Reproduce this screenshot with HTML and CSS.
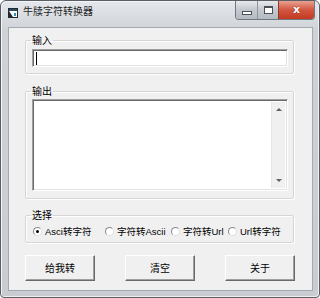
FILE: index.html
```html
<!DOCTYPE html>
<html>
<head>
  <title>牛牍字符转换器</title>
  <link rel="stylesheet" href="styles.css">
</head>
<body>
  <div class="window">
    <div class="titlebar">
      <svg class="app-icon" width="10" height="10" viewBox="0 0 10 10">
        <rect x="0.5" y="0.5" width="9" height="9" fill="#ffffff" stroke="#1d2a33"/>
        <rect x="1" y="1" width="8" height="2" fill="#2b4b5c"/>
        <path d="M1 3 L5 9 L1 9 Z" fill="#1d2a33"/>
        <rect x="6" y="5" width="2" height="3" fill="#3a8fb7"/>
      </svg>
      <span class="title">牛牍字符转换器</span>
      <div class="caption-buttons">
        <div class="cap cap-min"><span class="min-bar"></span></div>
        <div class="cap cap-max"><span class="max-box"></span></div>
        <div class="cap cap-close">x</div>
      </div>
    </div>
    <div class="client">
      <fieldset class="group group-in">
        <legend>输入</legend>
        <div class="textbox textbox-in"><span class="caret"></span></div>
      </fieldset>
      <fieldset class="group group-out">
        <legend>输出</legend>
        <div class="textbox textbox-out">
          <div class="scrollbar">
            <span class="arrow arrow-up"></span>
            <span class="arrow arrow-down"></span>
          </div>
        </div>
      </fieldset>
      <fieldset class="group group-sel">
        <legend>选择</legend>
        <div class="radios">
          <label class="radio-item item-1"><span class="radio checked"></span>Asci转字符</label>
          <label class="radio-item item-2"><span class="radio"></span>字符转Ascii</label>
          <label class="radio-item item-3"><span class="radio"></span>字符转Url</label>
          <label class="radio-item item-4"><span class="radio"></span>Url转字符</label>
        </div>
      </fieldset>
      <div class="buttons">
        <div class="btn">给我转</div>
        <div class="btn">清空</div>
        <div class="btn">关于</div>
      </div>
    </div>
  </div>
</body>
</html>
```

FILE: styles.css
```css
body {
  margin: 0;
  padding: 0;
  background-color: #ffffff;
  font-family: "Liberation Sans", "Noto Sans CJK SC", sans-serif;
  font-size: 10px;
  color: #000000;
}

.window {
  width: 320px;
  height: 298px;
  box-sizing: border-box;
  border: 1px solid #5a5f66;
  border-radius: 6px 6px 4px 4px;
  background: linear-gradient(#e4e7eb, #cfd3d8 30px, #c9cdd2);
  box-shadow: inset 1px 1px 0 #f4f5f6, inset -1px -1px 0 #eef0f2;
}

.titlebar {
  height: 25px;
  display: flex;
  align-items: flex-start;
}

.app-icon {
  margin: 7px 0 0 7px;
}

.title {
  margin: 3px 0 0 5px;
  font-family: "Noto Sans CJK SC", sans-serif;
  font-size: 10px;
  line-height: 14px;
  color: #1e1e1e;
}

.caption-buttons {
  margin-left: auto;
  margin-right: 4px;
  display: flex;
  height: 18px;
  border: 1px solid #707780;
  border-top: none;
  border-radius: 0 0 4px 4px;
  overflow: hidden;
}

.cap {
  height: 18px;
  display: flex;
  align-items: center;
  justify-content: center;
  box-sizing: border-box;
}

.cap-min {
  width: 22px;
  background: linear-gradient(#e8eaed, #c3c8ce 50%, #b5bbc2);
  border-right: 1px solid #8f969e;
}

.cap-max {
  width: 20px;
  background: linear-gradient(#e8eaed, #c3c8ce 50%, #b5bbc2);
}

.cap-close {
  width: 36px;
  background: linear-gradient(#e8a193, #d2553f 50%, #c23a22);
  border-left: 1px solid #8a3a2c;
  color: #ffffff;
  font-family: "DejaVu Sans", sans-serif;
  font-weight: bold;
  font-size: 11px;
  line-height: 16px;
  text-shadow: 0 0 1px #6a2010;
}

.min-bar {
  width: 8px;
  height: 2px;
  margin-top: 6px;
  background: #ffffff;
  border: 1px solid #4a5058;
}

.max-box {
  width: 7px;
  height: 5px;
  border: 1px solid #4a5058;
  border-top-width: 2px;
  background: #ffffff;
}

.client {
  margin: 1px 0 0 7px;
  width: 305px;
  height: 264px;
  box-sizing: border-box;
  background-color: #f0f0f0;
  border: 1px solid #a3a9b0;
  padding: 6px 0 0 16px;
  display: flex;
  flex-direction: column;
}

.group {
  margin: 0;
  padding: 0 0 0 6px;
  width: 269px;
  box-sizing: border-box;
  border: 1px solid #d5d5d5;
  border-radius: 2px;
  box-shadow: inset 1px 1px 0 #ffffff, 1px 1px 0 #ffffff;
  min-width: 0;
  flex-shrink: 0;
}

.group legend {
  padding: 0 1px;
  margin-left: -1px;
  font-family: "Noto Sans CJK SC", sans-serif;
  font-size: 10px;
  line-height: 12px;
  height: 12px;
}

.group-in {
  height: 40px;
}

.group-out {
  height: 114px;
  margin-top: 11px;
}

.group-sel {
  height: 34px;
  margin-top: 10px;
}

.textbox {
  width: 256px;
  box-sizing: border-box;
  background-color: #ffffff;
  border-top: 1px solid #a0a0a0;
  border-left: 1px solid #a0a0a0;
  border-right: 1px solid #ffffff;
  border-bottom: 1px solid #ffffff;
  box-shadow: inset 1px 1px 0 #696969, inset -1px -1px 0 #e3e3e3;
  position: relative;
}

.textbox-in {
  height: 18px;
  margin-top: 3px;
}

.caret {
  position: absolute;
  left: 3px;
  top: 2px;
  width: 1px;
  height: 13px;
  background: #000000;
}

.textbox-out {
  height: 92px;
  margin-top: 2px;
  display: flex;
  justify-content: flex-end;
  padding: 2px 2px 2px 0;
}

.scrollbar {
  width: 13px;
  height: 100%;
  background: #f0f0f0;
  border-left: 1px solid #e6e6e6;
  position: relative;
}

.arrow {
  position: absolute;
  left: 4px;
  width: 0;
  height: 0;
  border-left: 3px solid transparent;
  border-right: 3px solid transparent;
}

.arrow-up {
  top: 6px;
  border-bottom: 3px solid #606060;
}

.arrow-down {
  bottom: 6px;
  border-top: 3px solid #606060;
}

.radios {
  display: flex;
  align-items: center;
  margin-top: 3px;
  height: 14px;
}

.radio-item {
  display: flex;
  align-items: center;
  font-family: "Liberation Sans", "Noto Sans CJK SC", sans-serif;
  font-size: 9.5px;
  line-height: 13px;
  white-space: nowrap;
  flex-shrink: 0;
}

.item-1 {
  width: 72px;
}

.item-2 {
  width: 66px;
}

.item-3 {
  width: 57px;
}

.radio {
  width: 9px;
  height: 9px;
  box-sizing: border-box;
  border-radius: 50%;
  border: 1px solid #8a8a8a;
  border-right-color: #e0e0e0;
  border-bottom-color: #e0e0e0;
  background: #ffffff;
  margin: 0 3px 0 1px;
  position: relative;
}

.radio.checked::after {
  content: "";
  position: absolute;
  left: 2px;
  top: 2px;
  width: 3px;
  height: 3px;
  border-radius: 50%;
  background: #000000;
}

.buttons {
  display: flex;
  gap: 30px;
  margin-top: 12px;
}

.btn {
  width: 70px;
  height: 26px;
  box-sizing: border-box;
  background-color: #f0f0f0;
  border-top: 1px solid #ffffff;
  border-left: 1px solid #ffffff;
  border-right: 1px solid #696969;
  border-bottom: 1px solid #696969;
  box-shadow: inset -1px -1px 0 #a0a0a0;
  display: flex;
  align-items: center;
  justify-content: center;
  font-family: "Noto Sans CJK SC", sans-serif;
  font-size: 10px;
  line-height: 14px;
}
```
